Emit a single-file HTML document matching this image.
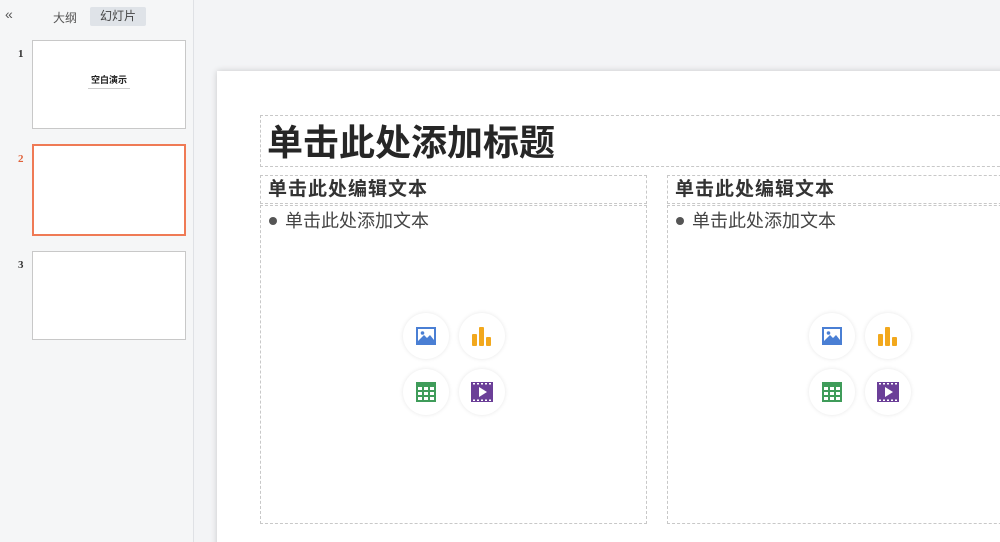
<!DOCTYPE html>
<html><head><meta charset="utf-8"><style>
*{margin:0;padding:0;box-sizing:border-box}
html,body{width:1000px;height:542px;overflow:hidden}
body{background:#f3f4f6;font-family:"Liberation Sans","Noto Sans CJK SC",sans-serif;position:relative}
.side{position:absolute;left:0;top:0;width:194px;height:542px;background:#f5f6f7;border-right:1px solid #dfe1e5}
.abs{position:absolute}
.thumb{position:absolute;left:32px;width:154px;background:#fff;border:1px solid #c8c8c8}
.num{position:absolute;left:18px;font-size:11px;color:#333;font-weight:bold;font-family:"Liberation Serif",serif}
.slide{position:absolute;left:217px;top:71px;width:800px;height:480px;background:#fff;box-shadow:0 0 6px rgba(0,0,0,.18)}
.box{position:absolute;border:1px dashed #c8c8c8}
.t{font-weight:bold;color:#262626;white-space:nowrap;position:absolute}
.ic{position:absolute;width:46px;height:46px;border-radius:50%;background:#fff;box-shadow:0 0 4px rgba(0,0,0,.1)}
.ic svg{position:absolute;left:12px;top:12px}
.bt{position:absolute;font-size:18px;color:#444;line-height:24px;white-space:nowrap}
.bt i{display:inline-block;width:8px;height:8px;border-radius:50%;background:#555;margin-right:8px;vertical-align:2px}
</style></head><body>
<div class="side">
 <div class="abs" style="left:5px;top:6px;font-size:14px;color:#555">&#171;</div>
 <div class="abs" style="left:53px;top:9px;font-size:12px;color:#555">大纲</div>
 <div class="abs" style="left:90px;top:7px;width:56px;height:19px;background:#dfe3e8;border-radius:2px;font-size:12px;color:#444;text-align:center;line-height:19px">幻灯片</div>
 <div class="num" style="top:48px">1</div>
 <div class="thumb" style="top:40px;height:89px">
  <div class="abs" style="left:0;width:152px;top:32px;text-align:center;font-size:9px;font-weight:bold;color:#222">空白演示</div>
  <div class="abs" style="left:55px;top:47px;width:42px;height:1px;background:#ccc"></div>
 </div>
 <div class="num" style="top:153px;color:#e0623a">2</div>
 <div class="thumb" style="top:144px;height:92px;border:2px solid #ef7a55"></div>
 <div class="num" style="top:259px">3</div>
 <div class="thumb" style="top:251px;height:89px"></div>
</div>
<div class="slide"></div>
<div class="box" style="left:260px;top:115px;width:760px;height:52px"></div>
<div class="t" style="left:267px;top:120px;font-size:36px;line-height:46px">单击此处添加标题</div>

<div class="box" style="left:260px;top:175px;width:387px;height:29px"></div>
<div class="t" style="left:268px;top:177px;font-size:19px;letter-spacing:1px;line-height:25px;color:#333">单击此处编辑文本</div>
<div class="box" style="left:260px;top:205px;width:387px;height:319px"></div>
<div class="bt" style="left:269px;top:209px"><i></i>单击此处添加文本</div>

<div class="box" style="left:667px;top:175px;width:360px;height:29px"></div>
<div class="t" style="left:675px;top:177px;font-size:19px;letter-spacing:1px;line-height:25px;color:#333">单击此处编辑文本</div>
<div class="box" style="left:667px;top:205px;width:360px;height:319px"></div>
<div class="bt" style="left:676px;top:209px"><i></i>单击此处添加文本</div>

<div class="ic" style="left:403px;top:313px"><svg width="22" height="22" viewBox="0 0 22 22"><rect x="1" y="2" width="20" height="18" fill="#4a7fd4"/><rect x="3" y="4" width="16" height="12" fill="#fff"/><circle cx="7.5" cy="8" r="1.8" fill="#4a7fd4"/><path d="M3 16 L9 10 L12 13 L15 10 L19 15 L19 16Z" fill="#4a7fd4"/></svg></div>
<div class="ic" style="left:459px;top:313px"><svg width="22" height="22" viewBox="0 0 22 22"><rect x="1" y="9" width="5" height="12" rx="1" fill="#f2a81d"/><rect x="8" y="2" width="5" height="19" rx="1" fill="#f2a81d"/><rect x="15" y="12" width="5" height="9" rx="1" fill="#f2a81d"/></svg></div>
<div class="ic" style="left:403px;top:369px"><svg width="22" height="22" viewBox="0 0 22 22"><rect x="1" y="1" width="20" height="20" fill="#3f9c5a"/><g fill="#fff"><rect x="3" y="6" width="4" height="3"/><rect x="9" y="6" width="4" height="3"/><rect x="15" y="6" width="4" height="3"/><rect x="3" y="11" width="4" height="3"/><rect x="9" y="11" width="4" height="3"/><rect x="15" y="11" width="4" height="3"/><rect x="3" y="16" width="4" height="3"/><rect x="9" y="16" width="4" height="3"/><rect x="15" y="16" width="4" height="3"/></g></svg></div>
<div class="ic" style="left:459px;top:369px"><svg width="22" height="22" viewBox="0 0 22 22"><rect x="0" y="1" width="22" height="20" fill="#6b3f98"/><g fill="#fff"><rect x="2" y="2" width="2" height="1.5"/><rect x="6" y="2" width="2" height="1.5"/><rect x="10" y="2" width="2" height="1.5"/><rect x="14" y="2" width="2" height="1.5"/><rect x="18" y="2" width="2" height="1.5"/><rect x="2" y="18.5" width="2" height="1.5"/><rect x="6" y="18.5" width="2" height="1.5"/><rect x="10" y="18.5" width="2" height="1.5"/><rect x="14" y="18.5" width="2" height="1.5"/><rect x="18" y="18.5" width="2" height="1.5"/><path d="M8 6 L16 11 L8 16Z"/></g></svg></div>

<div class="ic" style="left:809px;top:313px"><svg width="22" height="22" viewBox="0 0 22 22"><rect x="1" y="2" width="20" height="18" fill="#4a7fd4"/><rect x="3" y="4" width="16" height="12" fill="#fff"/><circle cx="7.5" cy="8" r="1.8" fill="#4a7fd4"/><path d="M3 16 L9 10 L12 13 L15 10 L19 15 L19 16Z" fill="#4a7fd4"/></svg></div>
<div class="ic" style="left:865px;top:313px"><svg width="22" height="22" viewBox="0 0 22 22"><rect x="1" y="9" width="5" height="12" rx="1" fill="#f2a81d"/><rect x="8" y="2" width="5" height="19" rx="1" fill="#f2a81d"/><rect x="15" y="12" width="5" height="9" rx="1" fill="#f2a81d"/></svg></div>
<div class="ic" style="left:809px;top:369px"><svg width="22" height="22" viewBox="0 0 22 22"><rect x="1" y="1" width="20" height="20" fill="#3f9c5a"/><g fill="#fff"><rect x="3" y="6" width="4" height="3"/><rect x="9" y="6" width="4" height="3"/><rect x="15" y="6" width="4" height="3"/><rect x="3" y="11" width="4" height="3"/><rect x="9" y="11" width="4" height="3"/><rect x="15" y="11" width="4" height="3"/><rect x="3" y="16" width="4" height="3"/><rect x="9" y="16" width="4" height="3"/><rect x="15" y="16" width="4" height="3"/></g></svg></div>
<div class="ic" style="left:865px;top:369px"><svg width="22" height="22" viewBox="0 0 22 22"><rect x="0" y="1" width="22" height="20" fill="#6b3f98"/><g fill="#fff"><rect x="2" y="2" width="2" height="1.5"/><rect x="6" y="2" width="2" height="1.5"/><rect x="10" y="2" width="2" height="1.5"/><rect x="14" y="2" width="2" height="1.5"/><rect x="18" y="2" width="2" height="1.5"/><rect x="2" y="18.5" width="2" height="1.5"/><rect x="6" y="18.5" width="2" height="1.5"/><rect x="10" y="18.5" width="2" height="1.5"/><rect x="14" y="18.5" width="2" height="1.5"/><rect x="18" y="18.5" width="2" height="1.5"/><path d="M8 6 L16 11 L8 16Z"/></g></svg></div>
</body></html>
